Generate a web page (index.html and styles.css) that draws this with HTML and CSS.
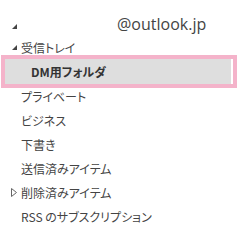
FILE: index.html
```html
<!DOCTYPE html>
<html lang="ja">
<head>
    <meta charset="UTF-8">
    <title>フォルダ</title>
    <link rel="stylesheet" href="styles.css">
</head>
<body>

    <div class="pane">
        <!-- アカウント -->
        <div class="account">
            <svg class="twisty" width="5" height="5" viewBox="0 0 5 5"><polygon points="5,0 5,5 0,5" fill="#444"/></svg>
            <span class="account-name">@outlook.jp</span>
        </div>

        <div class="row top">
            <svg class="twisty" width="5" height="5" viewBox="0 0 5 5"><polygon points="5,0 5,5 0,5" fill="#444"/></svg>
            <span>受信トレイ</span>
        </div>

        <div class="frame">
            <div class="row sub selected">DM用フォルダ</div>
        </div>

        <div class="row sub">プライベート</div>
        <div class="row sub">ビジネス</div>
        <div class="row sub">下書き</div>
        <div class="row sub">送信済みアイテム</div>
        <div class="row top">
            <svg class="twisty open" width="6" height="9" viewBox="0 0 6 9"><polygon points="0.5,0.5 5.5,4.5 0.5,8.5" fill="none" stroke="#666" stroke-width="1"/></svg>
            <span>削除済みアイテム</span>
        </div>
        <div class="row sub">RSS のサブスクリプション</div>
    </div>

</body>
</html>
```

FILE: styles.css
```css
body {
    margin: 0;
    background: #ffffff;
    font-family: "Noto Sans CJK JP", "Noto Sans", sans-serif;
    color: #444444;
}

.pane {
    padding-top: 12px;
}

.account {
    display: flex;
    align-items: center;
    height: 23px;
    padding-left: 12px;
}

.account .twisty {
    margin-top: 6px;
}

.account-name {
    margin-left: 100px;
    font-family: "Open Sans", sans-serif;
    font-size: 16px;
    color: #444444;
}

.row {
    display: flex;
    align-items: center;
    height: 24px;
    font-size: 12px;
    font-feature-settings: "palt";
    white-space: nowrap;
}

.row.top {
    padding-left: 12px;
}

.row.top .twisty {
    margin-right: 4px;
}

.row.top .twisty.open {
    margin-left: -1px;
    margin-right: 4px;
}

.row.sub {
    padding-left: 21px;
}

/* 選択中のフォルダ */
.frame {
    width: 226px;
    margin: -4px 0 -4px 1px;
    padding-right: 2px;
    border: 4px solid #f4b3ca;
}

.row.selected {
    height: 25px;
    padding-left: 26px;
    background: #dedede;
    font-weight: bold;
    color: #333333;
}
```
